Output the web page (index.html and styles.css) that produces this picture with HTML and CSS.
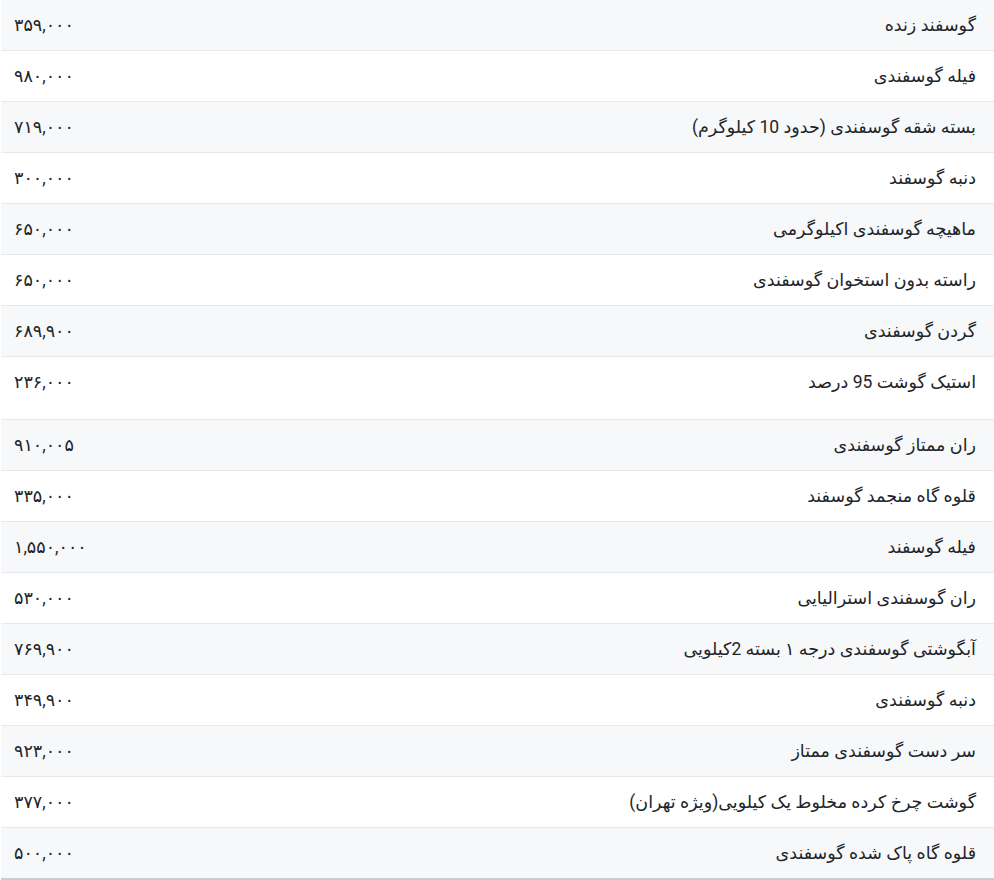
FILE: index.html
```html
<!DOCTYPE html>
<html lang="fa" dir="rtl">
<head>
<meta charset="utf-8">
<link rel="stylesheet" href="styles.css">
</head>
<body>
<table class="prices">
<tbody>
<tr><td class="name">گوسفند زنده</td><td class="price">۳۵۹,۰۰۰</td></tr>
<tr><td class="name">فیله گوسفندی</td><td class="price">۹۸۰,۰۰۰</td></tr>
<tr><td class="name">بسته شقه گوسفندی (حدود 10 کیلوگرم)</td><td class="price">۷۱۹,۰۰۰</td></tr>
<tr><td class="name">دنبه گوسفند</td><td class="price">۳۰۰,۰۰۰</td></tr>
<tr><td class="name">ماهیچه گوسفندی اکیلوگرمی</td><td class="price">۶۵۰,۰۰۰</td></tr>
<tr><td class="name">راسته بدون استخوان گوسفندی</td><td class="price">۶۵۰,۰۰۰</td></tr>
<tr><td class="name">گردن گوسفندی</td><td class="price">۶۸۹,۹۰۰</td></tr>
<tr class="tall"><td class="name">استیک گوشت 95 درصد</td><td class="price">۲۳۶,۰۰۰</td></tr>
<tr><td class="name">ران ممتاز گوسفندی</td><td class="price">۹۱۰,۰۰۵</td></tr>
<tr><td class="name">قلوه گاه منجمد گوسفند</td><td class="price">۳۳۵,۰۰۰</td></tr>
<tr><td class="name">فیله گوسفند</td><td class="price">۱,۵۵۰,۰۰۰</td></tr>
<tr><td class="name">ران گوسفندی استرالیایی</td><td class="price">۵۳۰,۰۰۰</td></tr>
<tr><td class="name">آبگوشتی گوسفندی درجه ۱ بسته 2کیلویی</td><td class="price">۷۶۹,۹۰۰</td></tr>
<tr><td class="name">دنبه گوسفندی</td><td class="price">۳۴۹,۹۰۰</td></tr>
<tr><td class="name">سر دست گوسفندی ممتاز</td><td class="price">۹۲۳,۰۰۰</td></tr>
<tr><td class="name">گوشت چرخ کرده مخلوط یک کیلویی(ویژه تهران)</td><td class="price">۳۷۷,۰۰۰</td></tr>
<tr><td class="name">قلوه گاه پاک شده گوسفندی</td><td class="price">۵۰۰,۰۰۰</td></tr>
</tbody>
</table>
</body>
</html>
```
FILE: styles.css
```css
html, body {
  margin: 0;
  padding: 0;
  background: #ffffff;
}
body {
  font-family: Roboto, "DejaVu Sans", sans-serif;
  color: #212529;
}
.prices {
  width: 993px;
  border-collapse: collapse;
  border-bottom: 2px solid #c7ccd6;
}
.prices td {
  font-size: 17.5px;
  line-height: 26px;
  padding: 12px 18px 12px 13px;
  border-top: 1px solid #e6e8ec;
  vertical-align: top;
}
.prices tr:first-child td {
  border-top: none;
}
.prices tr:nth-child(odd) td {
  background: #f7f8fa;
}
.prices .name {
  text-align: right;
}
.prices .price {
  text-align: left;
  width: 120px;
  padding-left: 13px;
}
.prices tr.tall td {
  padding-bottom: 24px;
}
```
